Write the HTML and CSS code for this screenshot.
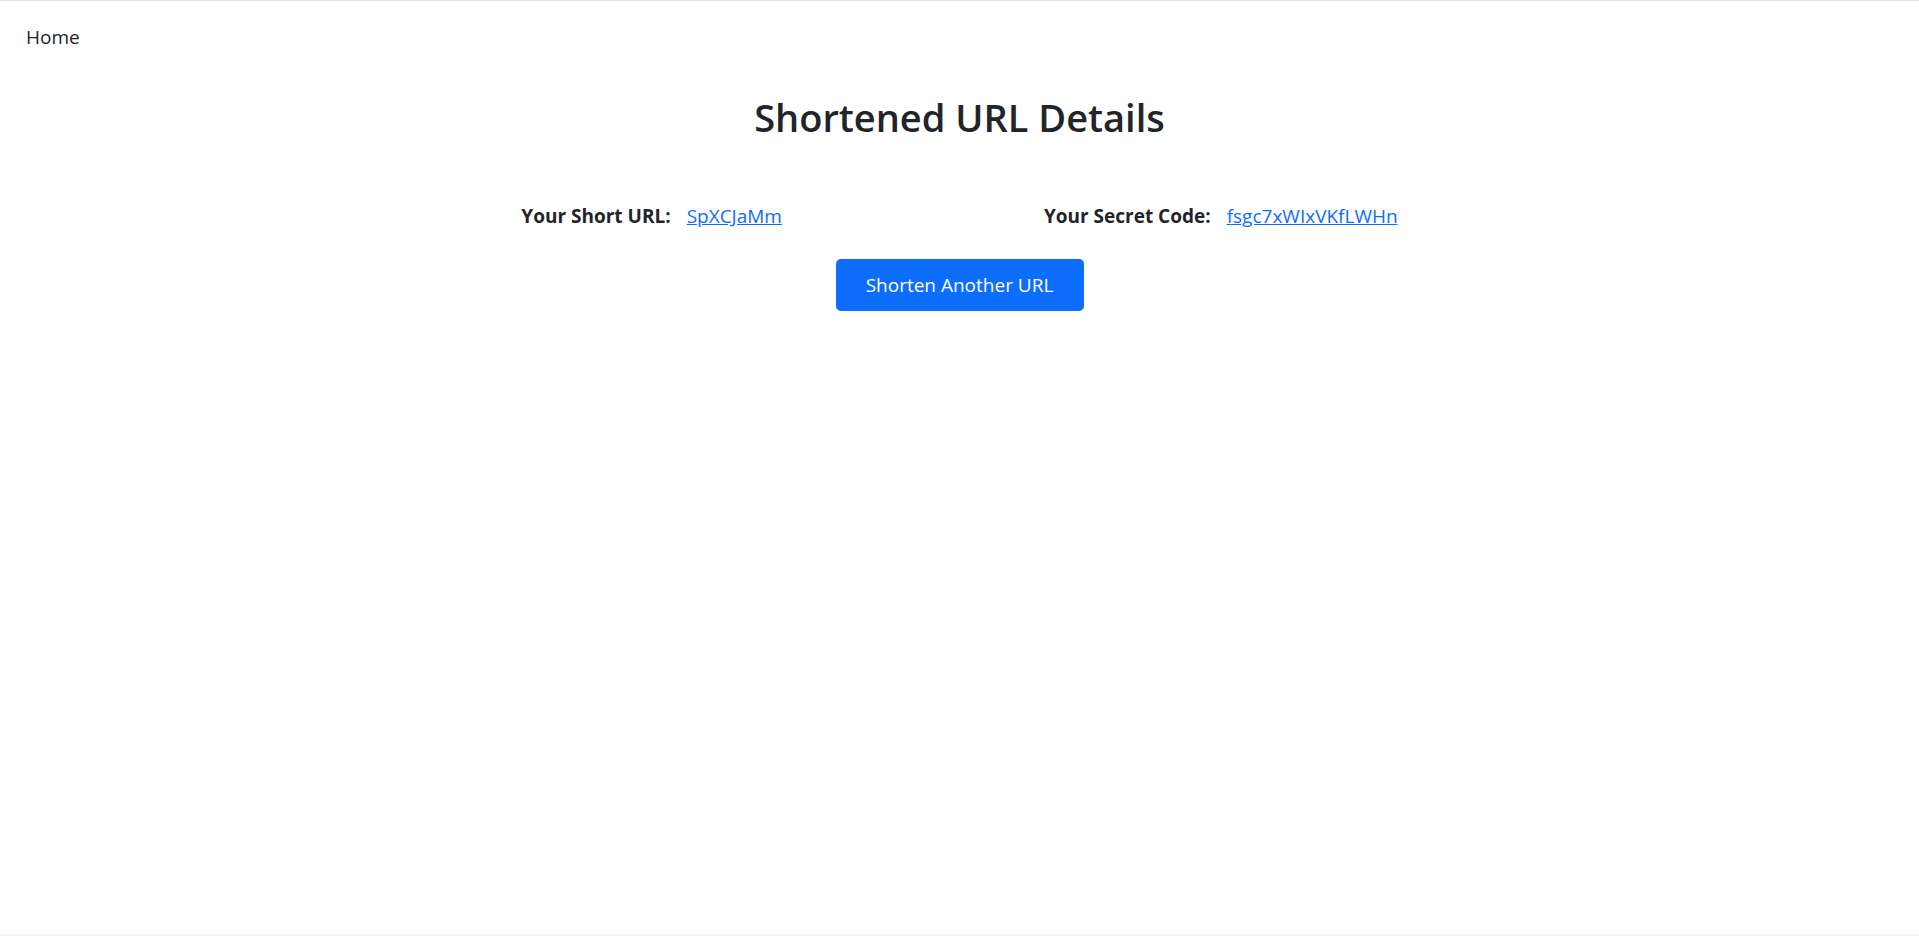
FILE: index.html
```html
<!DOCTYPE html>
<html lang="en">
<head>
<meta charset="utf-8">
<title>Shortened URL Details</title>
<link rel="stylesheet" href="styles.css">
</head>
<body>
<nav class="navbar">
  <a class="brand" href="#">Home</a>
</nav>
<main class="content">
  <h1 class="title">Shortened URL Details</h1>
  <div class="details">
    <div class="item">
      <span class="label">Your Short URL:</span>
      <a class="value" href="#">SpXCJaMm</a>
    </div>
    <div class="item">
      <span class="label">Your Secret Code:</span>
      <a class="value" href="#">fsgc7xWIxVKfLWHn</a>
    </div>
  </div>
  <div class="actions">
    <a class="btn" href="#">Shorten Another URL</a>
  </div>
</main>
</body>
</html>
```

FILE: styles.css
```css
html, body {
  margin: 0;
  padding: 0;
  height: 100%;
}
body {
  font-family: "Open Sans", "Noto Sans", "Liberation Sans", sans-serif;
  color: #212529;
  background: #fff;
  border-top: 1px solid #dee2e6;
  border-bottom: 2px solid #eef6f3;
  box-sizing: border-box;
}
.navbar {
  padding: 22px 26px 0;
  height: 38px;
}
.brand {
  font-size: 19px;
  line-height: 28px;
  color: #212529;
  text-decoration: none;
}
.content {
  display: flex;
  flex-direction: column;
  align-items: center;
}
.title {
  margin: 32px 0 0;
  font-size: 38px;
  font-weight: 600;
  line-height: 48px;
}
.details {
  display: flex;
  justify-content: center;
  gap: 262px;
  margin-top: 61px;
  font-size: 19px;
  line-height: 28px;
}
.item {
  display: flex;
  gap: 16px;
}
.label {
  font-weight: 700;
}
.value {
  color: #0d6efd;
  text-decoration: underline;
}
.actions {
  margin-top: 29px;
}
.btn {
  display: inline-block;
  box-sizing: border-box;
  width: 248px;
  height: 52px;
  line-height: 52px;
  text-align: center;
  background: #0d6efd;
  color: #fff;
  font-size: 19px;
  text-decoration: none;
  border-radius: 5px;
}
```
